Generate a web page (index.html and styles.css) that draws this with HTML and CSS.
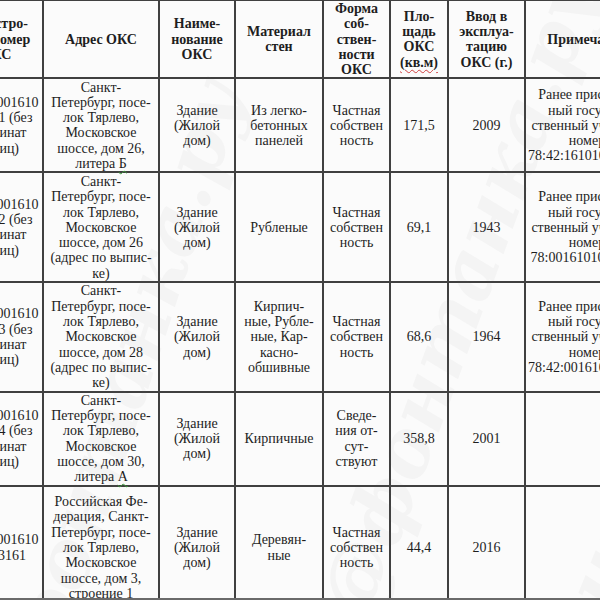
FILE: index.html
```html
<!DOCTYPE html>
<html lang="ru">
<head>
<meta charset="utf-8">
<title>Таблица ОКС</title>
<link rel="stylesheet" href="styles.css">
</head>
<body>
<div class="page">
  <table class="oks">
    <colgroup>
      <col class="c1"><col class="c2"><col class="c3"><col class="c4"><col class="c5"><col class="c6"><col class="c7"><col class="c8">
    </colgroup>
    <thead>
      <tr class="r-head">
        <th>Кадастро-<br>вый номер<br>ОКС</th>
        <th>Адрес ОКС</th>
        <th>Наиме-<br>нование<br>ОКС</th>
        <th>Материал<br>стен</th>
        <th>Форма<br>соб-<br>ствен-<br>ности<br>ОКС</th>
        <th>Пло-<br>щадь<br>ОКС<br><span class="spell">(кв.м)</span></th>
        <th>Ввод в<br>эксплуа-<br>тацию<br>ОКС (г.)</th>
        <th>Примечание</th>
      </tr>
    </thead>
    <tbody>
      <tr class="r1">
        <td>78:42:0001610<br>01:2001 (без<br>координат<br>границ)</td>
        <td>Санкт-<br>Петербург, посе-<br>лок Тярлево,<br>Московское<br>шоссе, дом 26,<br>литера <span class="gram">Б</span></td>
        <td>Здание<br>(Жилой<br>дом)</td>
        <td>Из легко-<br>бетонных<br>панелей</td>
        <td>Частная<br>собствен<br>ность</td>
        <td>171,5</td>
        <td>2009</td>
        <td>Ранее присвоен-<br>ный государ-<br>ственный учетный<br>номер<br>78:42:16101001:3021</td>
      </tr>
      <tr class="r2">
        <td>78:42:0001610<br>01:2002 (без<br>координат<br>границ)</td>
        <td>Санкт-<br>Петербург, посе-<br>лок Тярлево,<br>Московское<br>шоссе, дом 26<br>(адрес по выпис-<br>ке)</td>
        <td>Здание<br>(Жилой<br>дом)</td>
        <td>Рубленые</td>
        <td>Частная<br>собствен<br>ность</td>
        <td>69,1</td>
        <td>1943</td>
        <td>Ранее присвоен-<br>ный государ-<br>ственный учетный<br>номер<br>78:0016101001:302</td>
      </tr>
      <tr class="r3">
        <td>78:42:0001610<br>01:2003 (без<br>координат<br>границ)</td>
        <td>Санкт-<br>Петербург, посе-<br>лок Тярлево,<br>Московское<br>шоссе, дом 28<br>(адрес по выпис-<br>ке)</td>
        <td>Здание<br>(Жилой<br>дом)</td>
        <td>Кирпич-<br>ные, Рубле-<br>ные, Кар-<br>касно-<br>обшивные</td>
        <td>Частная<br>собствен<br>ность</td>
        <td>68,6</td>
        <td>1964</td>
        <td>Ранее присвоен-<br>ный государ-<br>ственный учетный<br>номер<br>78:42:0016101001:30</td>
      </tr>
      <tr class="r4">
        <td>78:42:0001610<br>01:2004 (без<br>координат<br>границ)</td>
        <td>Санкт-<br>Петербург, посе-<br>лок Тярлево,<br>Московское<br>шоссе, дом 30,<br>литера <span class="gram">А</span></td>
        <td>Здание<br>(Жилой<br>дом)</td>
        <td>Кирпичные</td>
        <td>Сведе-<br>ния от-<br>сут-<br>ствуют</td>
        <td>358,8</td>
        <td>2001</td>
        <td></td>
      </tr>
      <tr class="r5">
        <td>78:42:0001610<br>1001:3161</td>
        <td>Российская Фе-<br>дерация, Санкт-<br>Петербург, посе-<br>лок Тярлево,<br>Московское<br>шоссе, дом 3,<br>строение 1</td>
        <td>Здание<br>(Жилой<br>дом)</td>
        <td>Деревян-<br>ные</td>
        <td>Частная<br>собствен<br>ность</td>
        <td>44,4</td>
        <td>2016</td>
        <td></td>
      </tr>
    </tbody>
  </table>
  <div class="wm wm-a">фонтанка.ру</div>
  <div class="wm wm-b">@фонтанка.ру</div>
  <div class="wm wm-c">фонтанка.ру</div>
</div>
</body>
</html>
```

FILE: styles.css
```css
html, body {
  margin: 0;
  padding: 0;
  background: #ffffff;
}

.page {
  position: relative;
  width: 600px;
  height: 598px;
  overflow: hidden;
  border-bottom: 2px solid #6a6a6a;
  background: #fbfbfb;
}

.oks {
  table-layout: fixed;
  border-collapse: collapse;
  width: 700px;
  margin-left: -52px;
  margin-top: -1px;
  font-family: "Liberation Serif", "Times New Roman", serif;
  font-size: 14px;
  line-height: 15.3px;
  color: #1e1e1e;
}

.c1 { width: 94px; }
.c2 { width: 116px; }
.c3 { width: 76px; }
.c4 { width: 88px; }
.c5 { width: 67px; }
.c6 { width: 58px; }
.c7 { width: 77px; }
.c8 { width: 124px; }

.oks th,
.oks td {
  border: 2px solid #404040;
  padding: 0 2px;
  text-align: center;
  vertical-align: middle;
  white-space: nowrap;
  overflow: visible;
}

.oks th {
  font-weight: bold;
}

.r-head { height: 78px; }
.r1 { height: 94px; }
.r2 { height: 110px; }
.r3 { height: 109px; }
.r4 { height: 94px; }
.r5 { height: 124px; }

.spell {
  text-decoration: underline wavy #d04040;
  text-decoration-thickness: 1px;
  text-underline-offset: 2px;
}

.gram {
  text-decoration: underline wavy #3a9a3a;
  text-decoration-thickness: 1px;
  text-underline-offset: 2px;
}

.wm {
  position: absolute;
  pointer-events: none;
  font-family: "DejaVu Serif", serif;
  font-weight: bold;
  font-style: italic;
  font-size: 78px;
  color: rgba(120, 120, 120, 0.05);
  white-space: nowrap;
  transform-origin: 0 0;
}

.wm-a {
  left: -10px;
  top: 640px;
  transform: rotate(-72deg);
}

.wm-b {
  left: 300px;
  top: 600px;
  transform: rotate(-70deg);
}

.wm-c {
  left: 500px;
  top: 700px;
  transform: rotate(-68deg);
}
```
